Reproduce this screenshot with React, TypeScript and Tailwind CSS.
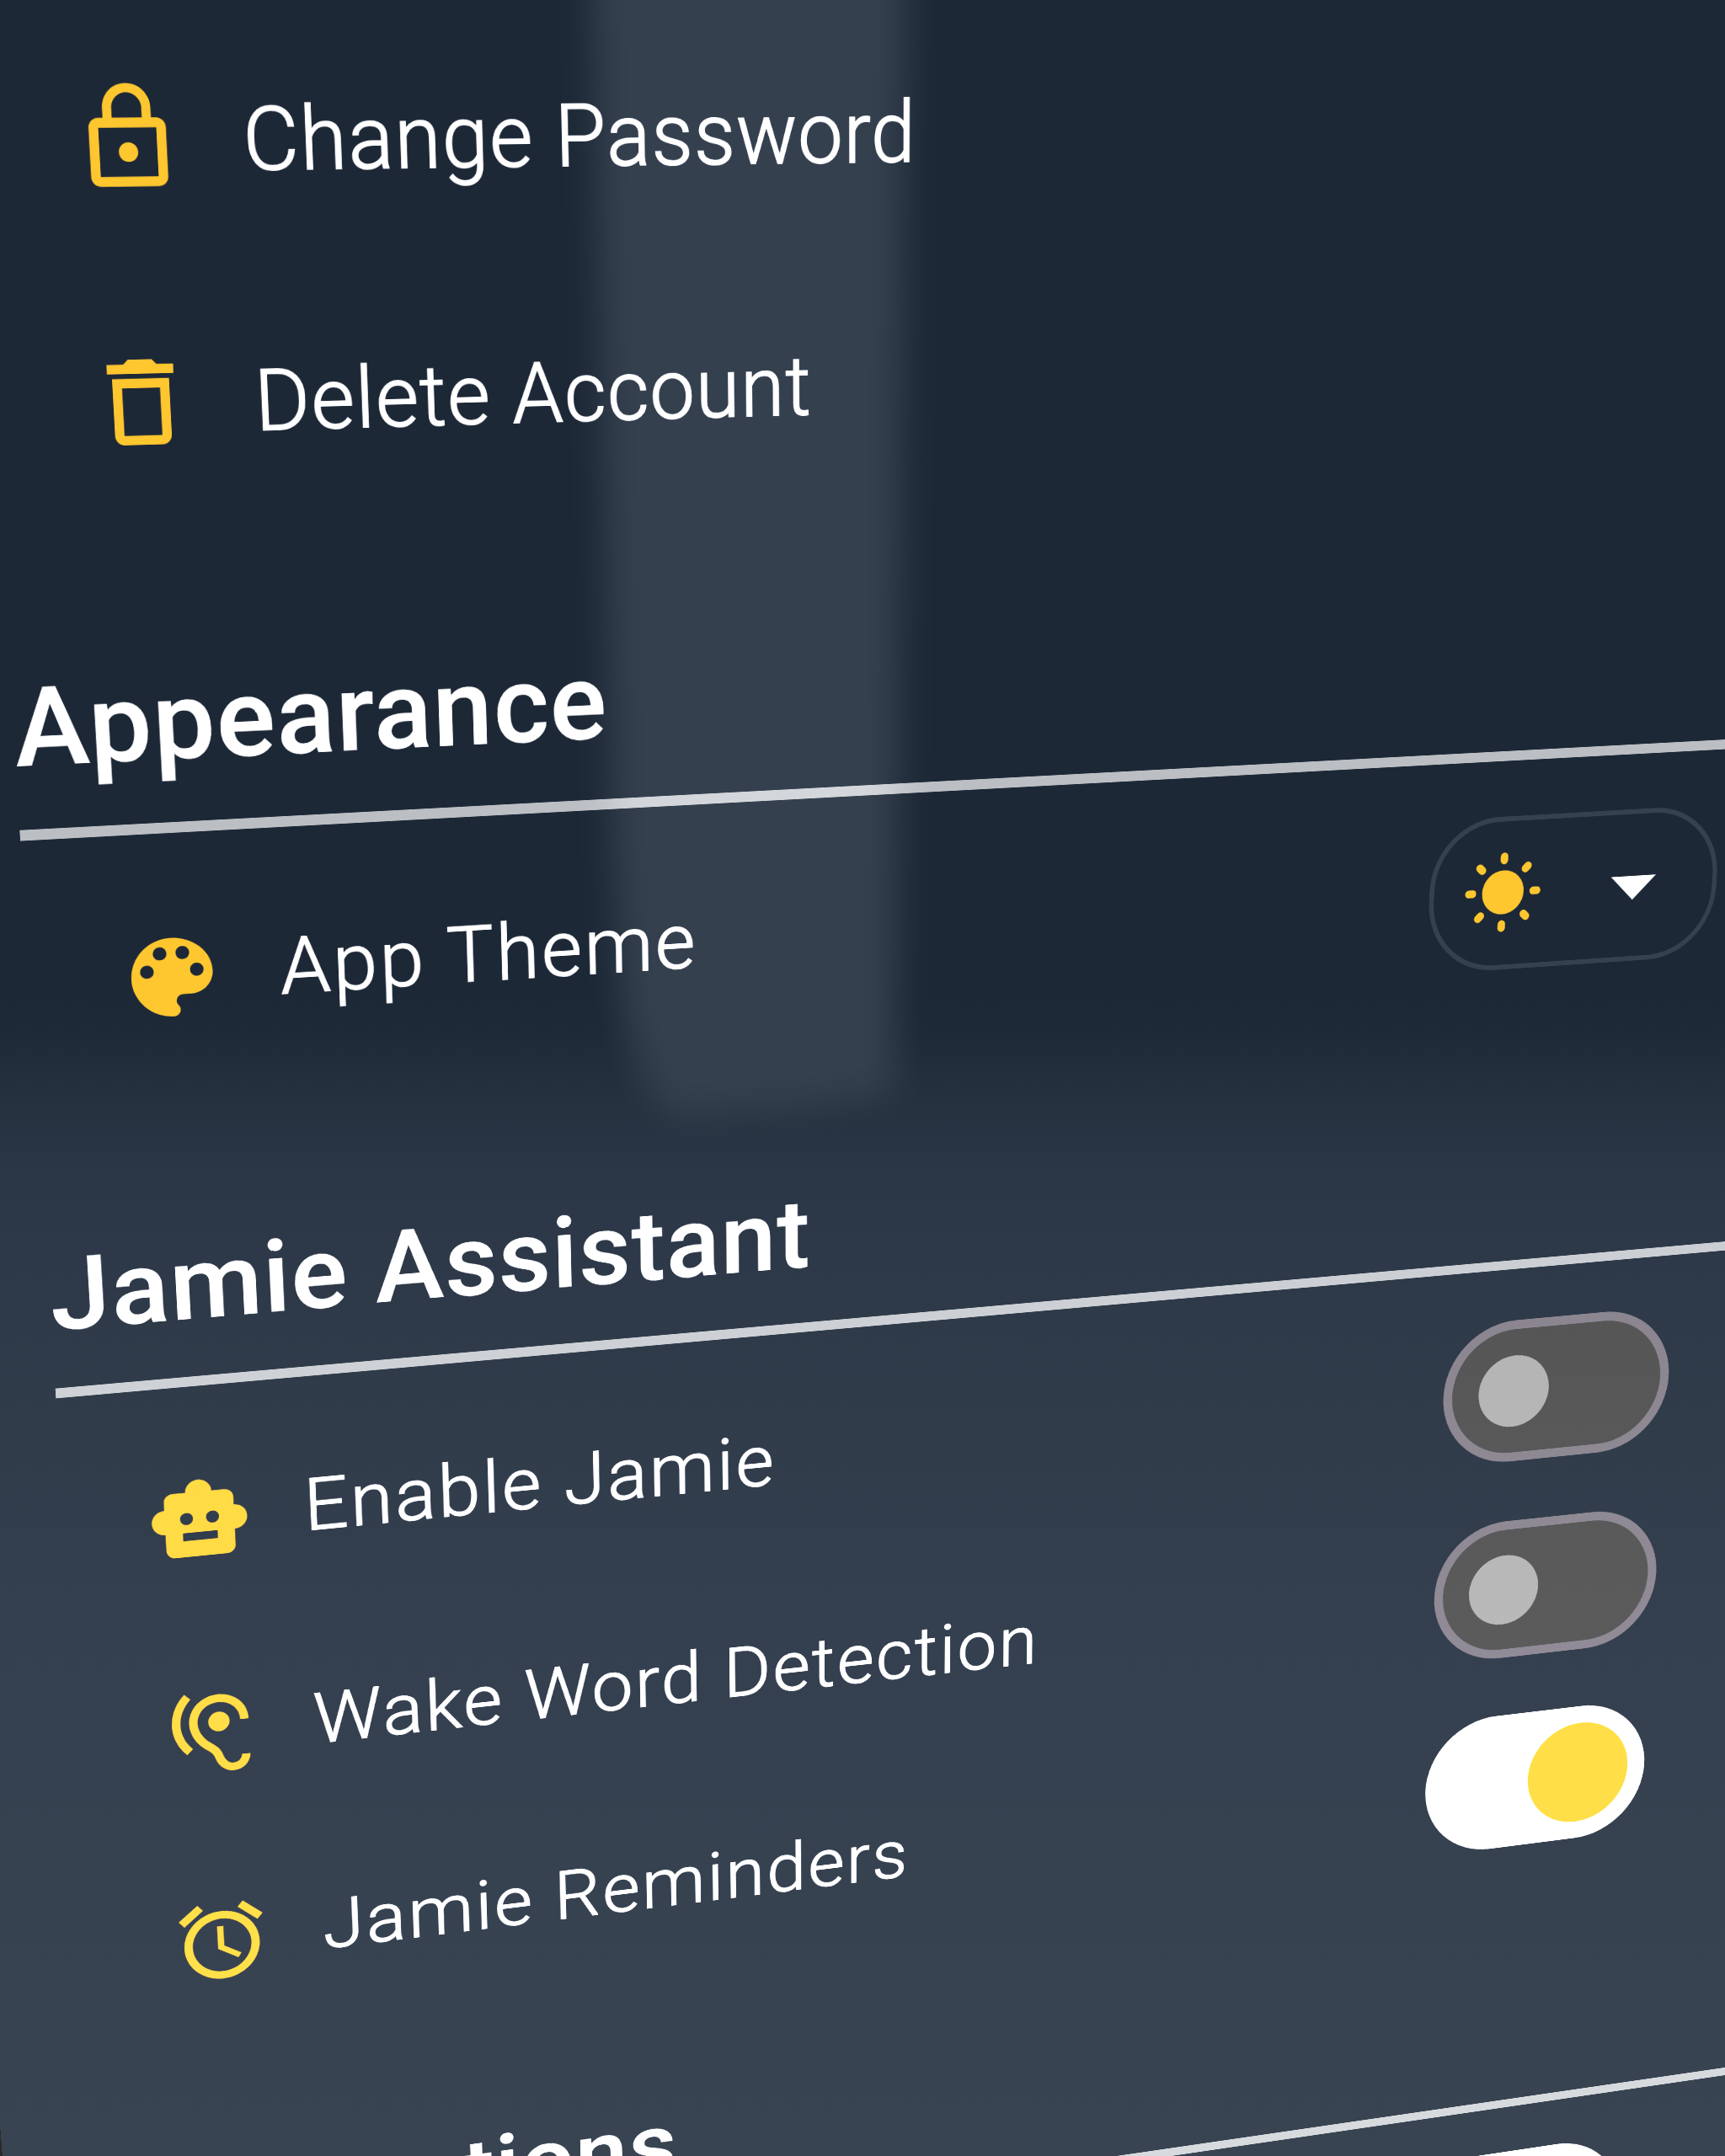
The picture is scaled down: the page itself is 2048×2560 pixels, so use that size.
import type { ReactNode } from "react";
import {
  MdAlarm,
  MdArrowDropDown,
  MdDeleteOutline,
  MdHearing,
  MdLockOutline,
  MdSmartToy,
} from "react-icons/md";

/* The settings sheet is laid out flat and then tilted in perspective.
   The tilt is described by the two vanishing points of the sheet. */
const UNIT = 8;
const PAD_X = 20;
const PAD_Y = 170;
const ORIGIN = { x: 23.3, y: 985.7 };
const VANISH_H = { x: 19130, y: -31 };
const VANISH_V = { x: 1027, y: 16700 };
const G = 3.482e-4;
const H = 4.077e-4;

function sheetTransform(): string {
  const ax = (VANISH_H.x * G) / UNIT;
  const ay = (VANISH_H.y * G) / UNIT;
  const bx = (VANISH_V.x * H) / UNIT;
  const by = (VANISH_V.y * H) / UNIT;
  const cx = ORIGIN.x - UNIT * (PAD_X * ax + PAD_Y * bx);
  const cy = ORIGIN.y - UNIT * (PAD_X * ay + PAD_Y * by);
  const gw = G / UNIT;
  const hw = H / UNIT;
  const cw = 1 - PAD_X * G - PAD_Y * H;
  const m = [ax, ay, 0, gw, bx, by, 0, hw, 0, 0, 1, 0, cx, cy, 0, cw];
  return `matrix3d(${m.map((n) => n.toFixed(10)).join(",")})`;
}

function Heading({ children, className = "ml-px" }: { children: ReactNode; className?: string }) {
  return (
    <>
      <h2
        className={`mb-[54px] text-[160px] leading-[188px] font-medium tracking-[1.8px] whitespace-nowrap text-white [-webkit-text-stroke:0.8px_white] ${className}`}
      >
        {children}
      </h2>
      <div className="mb-9 h-4 bg-white/70" />
    </>
  );
}

type RowProps = {
  icon: ReactNode;
  label: string;
  labelClass?: string;
  children?: ReactNode;
};

function Row({ icon, label, labelClass = "mb-1.5 tracking-[4px]", children }: RowProps) {
  return (
    <div className="flex h-[363px] items-center pl-32">
      <span className="flex size-40 items-center justify-center text-[160px] text-[#fec62f]">{icon}</span>
      <span
        className={`ml-20 text-[120px] leading-none font-light whitespace-nowrap text-white [-webkit-text-stroke:2px_white] ${labelClass}`}
      >
        {label}
      </span>
      {children}
    </div>
  );
}

function Switch({ on = false }: { on?: boolean }) {
  return on ? (
    <div className="mr-[282px] ml-auto flex h-[254px] w-[414px] items-center justify-end rounded-full bg-white pr-8">
      <div className="size-[190px] rounded-full bg-[#fec62f]" />
    </div>
  ) : (
    <div className="mr-[282px] ml-auto flex h-[254px] w-[414px] items-center rounded-full border-16 border-[#79747e] bg-[#444444] pl-12">
      <div className="size-32 rounded-full bg-[#a2a2a2]" />
    </div>
  );
}

function Palette() {
  return (
    <svg viewBox="0 0 24 24" fill="currentColor" className="size-40">
      <path d="M12 3c-4.97 0-9 4.03-9 9s4.03 9 9 9c.83 0 1.5-.67 1.5-1.5 0-.39-.15-.74-.39-1.01-.23-.26-.38-.61-.38-.99 0-.83.67-1.5 1.5-1.5H16c2.76 0 5-2.24 5-5 0-4.42-4.03-8-9-8zm-5.5 9c-.83 0-1.5-.67-1.5-1.5S5.67 9 6.5 9 8 9.67 8 10.5 7.33 12 6.5 12zm3-4C8.67 8 8 7.33 8 6.5S8.67 5 9.5 5s1.5.67 1.5 1.5S10.33 8 9.5 8zm5 0c-.83 0-1.5-.67-1.5-1.5S13.67 5 14.5 5s1.5.67 1.5 1.5S15.33 8 14.5 8zm3 4c-.83 0-1.5-.67-1.5-1.5S16.67 9 17.5 9s1.5.67 1.5 1.5-.67 1.5-1.5 1.5z" />
    </svg>
  );
}

const RAY_ANGLES = [0, 45, 90, 135, 180, 225, 270, 315];

function Sun() {
  return (
    <svg viewBox="-10 -10 20 20" className="mb-1 size-40 text-[#fec62f]">
      <circle r="4.55" fill="currentColor" />
      {RAY_ANGLES.map((a) => (
        <line
          key={a}
          x1="6.65"
          x2="7.4"
          stroke="currentColor"
          strokeWidth="1.65"
          strokeLinecap="round"
          transform={`rotate(${a})`}
        />
      ))}
    </svg>
  );
}

function ThemePicker() {
  return (
    <div className="mr-[252px] ml-auto flex h-[254px] w-[508px] items-center rounded-[118px] border-8 border-[#35414e] pl-10">
      <Sun />
      <MdArrowDropDown className="ml-[54px] size-48 text-white" />
    </div>
  );
}

function Glare() {
  return (
    <div className="pointer-events-none absolute inset-0 isolate overflow-hidden bg-black mix-blend-plus-lighter">
      <div className="absolute inset-0 bg-[linear-gradient(to_bottom,#000000_46%,#020202_48%,#090909_51%,#0d0d0e_54%,#101011_58%,#141414_66%,#171718_76%,#1a1a1a_88%,#1c1c1b_100%)]" />
      <div className="absolute inset-0 mix-blend-lighten blur-[20px]">
        <div className="absolute inset-x-0 -top-20 h-[1440px] bg-[#181818] [clip-path:polygon(702px_0,1076px_0,1066px_1000px,1062px_1380px,960px_1398px,795px_1408px,764px_1368px,740px_1290px,728px_1080px)]" />
      </div>
    </div>
  );
}

export default function App() {
  return (
    <div className="relative h-[2560px] w-[2048px] overflow-hidden bg-[#0f0e0d] font-['Roboto',sans-serif]">
      <div
        className="flex h-[4400px] w-[3296px] origin-top-left flex-col bg-[#1d2837] px-40 pt-[206px]"
        style={{ transform: sheetTransform() }}
      >
        <Row
          icon={<MdLockOutline className="mb-1 shrink-0" />}
          label="Change Password"
          labelClass="mt-1.5 tracking-[1.9px]"
        />
        <Row icon={<MdDeleteOutline />} label="Delete Account" labelClass="mt-1.5 tracking-[2px]" />
        <section className="mt-[186px]">
          <Heading>Appearance</Heading>
          <Row icon={<Palette />} label="App Theme" labelClass="mb-2.5 tracking-[4px]">
            <ThemePicker />
          </Row>
        </section>
        <section className="mt-[207px]">
          <Heading>Jamie Assistant</Heading>
          <Row
            icon={<MdSmartToy className="mt-1 mr-1 shrink-0" />}
            label="Enable Jamie"
            labelClass="mb-2 tracking-[4px]"
          >
            <Switch />
          </Row>
          <Row icon={<MdHearing className="mt-1 mr-1 shrink-0" />} label="Wake Word Detection">
            <Switch />
          </Row>
          <Row icon={<MdAlarm className="mt-1 mr-1 shrink-0" />} label="Jamie Reminders">
            <Switch on />
          </Row>
        </section>
        <section className="mt-[207px]">
          <Heading className="ml-2">Automations</Heading>
          <div className="flex h-[363px] items-center">
            <Switch on />
          </div>
        </section>
      </div>
      <Glare />
    </div>
  );
}
